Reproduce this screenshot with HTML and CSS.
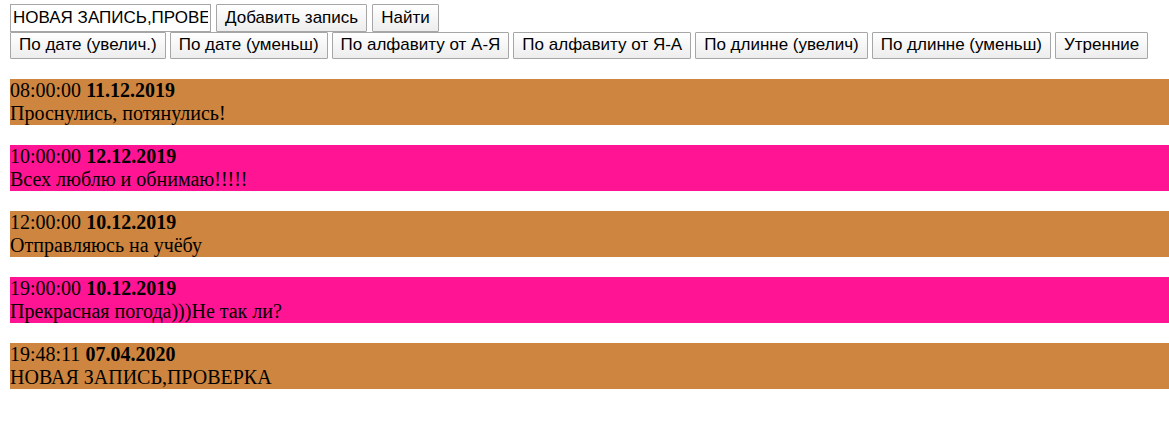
FILE: index.html
```html
<!DOCTYPE html>
<html lang="ru">
<head>
<meta charset="utf-8">
<title>Записи</title>
<link rel="stylesheet" href="styles.css">
</head>
<body>
<form class="toolbar">
  <input class="entry" type="text" aria-label="Текст записи" value="НОВАЯ ЗАПИСЬ,ПРОВЕРКА">
  <button class="btn" type="button">Добавить запись</button>
  <button class="btn" type="button">Найти</button>
</form>
<div class="toolbar sorting">
  <button class="btn" type="button">По дате (увелич.)</button>
  <button class="btn" type="button">По дате (уменьш)</button>
  <button class="btn" type="button">По алфавиту от А-Я</button>
  <button class="btn" type="button">По алфавиту от Я-А</button>
  <button class="btn" type="button">По длинне (увелич)</button>
  <button class="btn" type="button">По длинне (уменьш)</button>
  <button class="btn" type="button">Утренние</button>
</div>
<main class="notes">
  <p class="note">08:00:00 <b>11.12.2019</b><br>Проснулись, потянулись!</p>
  <p class="note">10:00:00 <b>12.12.2019</b><br>Всех люблю и обнимаю!!!!!</p>
  <p class="note">12:00:00 <b>10.12.2019</b><br>Отправляюсь на учёбу</p>
  <p class="note">19:00:00 <b>10.12.2019</b><br>Прекрасная погода)))Не так ли?</p>
  <p class="note">19:48:11 <b>07.04.2020</b><br>НОВАЯ ЗАПИСЬ,ПРОВЕРКА</p>
</main>
</body>
</html>
```
FILE: styles.css
```css
body {
  margin: 4px 0 0 10px;
  font: 20px/23px "Liberation Serif", "Times New Roman", serif;
  color: #000;
  background: #fff;
}
.toolbar {
  display: flex;
  flex-wrap: wrap;
  gap: 0 5px;
}
.entry,
.btn {
  box-sizing: border-box;
  height: 28px;
  margin: 0;
  border: 1px solid #a6a6a6;
  font: 17px/20px "Liberation Sans", Arial, sans-serif;
  color: #000;
}
.entry {
  width: 201px;
  padding: 1px 2px;
  border-radius: 0;
  background: #fff;
}
.btn {
  padding: 0 8px;
  border-radius: 1px;
  background: linear-gradient(#fff, #ededed);
}
.sorting {
  gap: 0 4px;
}
.sorting .btn {
  height: 27px;
  padding-bottom: 1px;
}
.notes {
  display: grid;
  gap: 20px;
  margin-top: 20px;
}
.note {
  margin: 0;
  background: #cd853f;
}
.note:nth-child(even) {
  background: #ff1493;
}
```
